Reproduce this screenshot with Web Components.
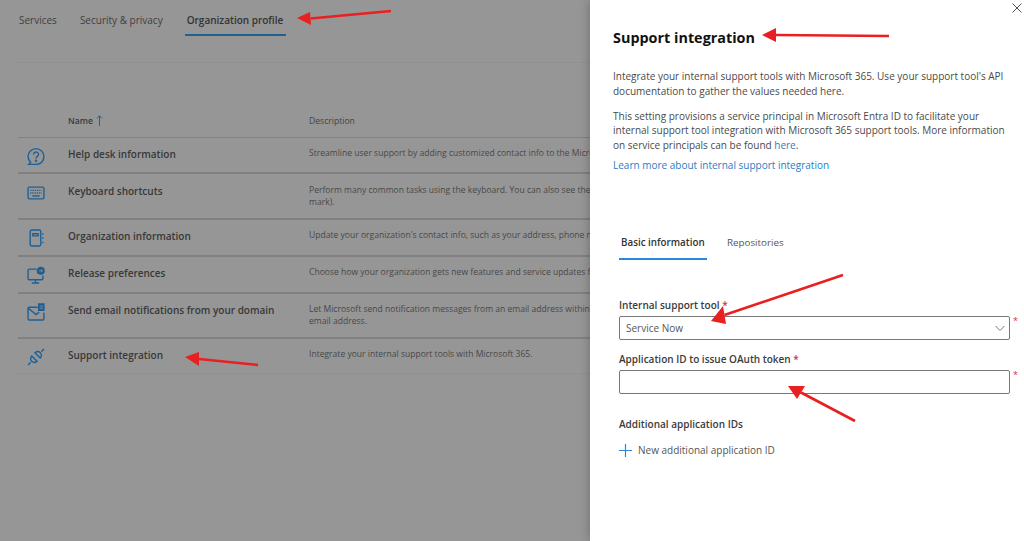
<!DOCTYPE html>
<html lang="en">
<head>
<meta charset="utf-8">
<title>Support integration</title>
<style>
  html, body { margin: 0; height: 541px; overflow: hidden; background: #969696; }
  body { font-family: "Open Sans", "Noto Sans", sans-serif; position: relative; }
  .page { display: flex; width: 1024px; height: 541px; }
  side-panel a { color: #2b7cc4; }
</style>
</head>
<body>
<div class="page">
  <settings-page>
    <page-tab slot="tabs" style="margin-right:1px">Services</page-tab>
    <page-tab slot="tabs">Security &amp; privacy</page-tab>
    <page-tab slot="tabs" active>Organization profile</page-tab>

    <settings-row h="36" icon="help" name="Help desk information">Streamline user support by adding customized contact info to the Microsoft 365 admin center.</settings-row>
    <settings-row h="46" pad="10" icon="keyboard" name="Keyboard shortcuts">Perform many common tasks using the keyboard. You can also see these shortcuts by pressing ? (question<br>mark).</settings-row>
    <settings-row h="37" icon="notebook" name="Organization information">Update your organization's contact info, such as your address, phone number and email.</settings-row>
    <settings-row h="37" icon="monitor" name="Release preferences">Choose how your organization gets new features and service updates from Microsoft 365.</settings-row>
    <settings-row h="45" icon="mail" name="Send email notifications from your domain">Let Microsoft send notification messages from an email address within your domain instead of the default<br>email address.</settings-row>
    <settings-row h="35" icon="plug" name="Support integration">Integrate your internal support tools with Microsoft 365.</settings-row>
  </settings-page>

  <side-panel heading="Support integration">
    <p>Integrate your internal support tools with Microsoft 365. Use your support tool's API documentation to gather the values needed here.</p>
    <p>This setting provisions a service principal in Microsoft Entra ID to facilitate your internal support tool integration with Microsoft 365 support tools. More information on service principals can be found <a>here</a>.</p>
    <p><a>Learn more about internal support integration</a></p>
    <support-form slot="form"></support-form>
  </side-panel>
</div>
<arrow-layer></arrow-layer>

<script>
const icons = {
  help: `<path d="M3.500 14.500C1.800 13 1 11 1 9a7.500 7.500 0 1 1 7.500 7.500H1.500l2-2z"/><path d="M6.200 7a2.300 2.300 0 1 1 3.600 1.900c-.9.600-1.300 1-1.300 2"/><circle cx="8.500" cy="13" r=".5"/>`,
  keyboard: `<rect x="1" y="3" width="15" height="11" rx="1.200"/><path stroke-dasharray="1.200 .9" d="M3 6h11M3 8.500h11"/><path d="M5 11.300h7"/>`,
  notebook: `<rect x="3" y="1" width="10" height="15" rx="1.500"/><path d="M5.500 4.500h5v2h-5zM15 4v1.500M15 8v1.500M15 12v1.500"/>`,
  monitor: `<path d="M9 3H2.200C1.500 3 1 3.500 1 4.200v7.600c0 .7.500 1.200 1.200 1.200h11.600c.7 0 1.200-.5 1.200-1.200V9M8 13v3M4.500 16h7"/><circle cx="13" cy="4.500" r="3.200" fill="#1f5f94"/><path d="M11.500 4.500h3M13.500 3.300l1 1.200-1 1.200" stroke="#969696" stroke-width=".8"/>`,
  mail: `<path d="M10 4H2.200C1.500 4 1 4.500 1 5.200v9.600c0 .7.500 1.200 1.200 1.200h12.600c.7 0 1.200-.5 1.200-1.200V9M1.300 5l7.200 6 3-2.400"/><path d="M11 1h5v6h-5z" fill="#1f5f94"/><path d="M12 3h3M12 5h3" stroke="#969696" stroke-width=".7"/>`,
  plug: `<path d="M1 16l2.500-2.500M16 1l-2.500 2.500M4.500 7.500l5 5c-1.500 1.500-3.500 1.500-5 .1s-1.500-3.600 0-5.100zM12.500 9.500l-5-5c1.500-1.500 3.500-1.500 5-.1s1.500 3.600 0 5.100z"/>`
};

class SettingsPage extends HTMLElement {
  constructor() {
    super();
    this.attachShadow({ mode: 'open' }).innerHTML = `
      <style>
        :host { display: block; width: 590px; height: 541px; overflow: hidden; flex: none; color: #3a3a3a; }
        .tabs { display: flex; gap: 22px; padding: 13px 0 0 19px; height: 23px; }
        .rule { margin: 26px 0 0 18px; border-top: 1px dotted #8a8a8a; }
        .head { display: grid; grid-template-columns: 241px 1fr; margin: 48px 0 0 18px; padding: 4px 0 0 50px; height: 27px; box-sizing: border-box; font-size: 8.600px; line-height: 12px; border-bottom: 1px solid #828282; }
        .head b { font-weight: 600; }
        .head span { color: #444; }
        .head svg { width: 7px; height: 11px; margin-left: 1px; vertical-align: -2px; stroke: #2a5f88; fill: none; }
      </style>
      <div class="tabs"><slot name="tabs"></slot></div>
      <div class="rule"></div>
      <div class="head"><div><b>Name</b> <svg viewBox="0 0 7 11"><path d="M3.500 11V1M1 3.300L3.500 .8 6 3.300"/></svg></div><span>Description</span></div>
      <slot></slot>`;
  }
}

class PageTab extends HTMLElement {
  constructor() {
    super();
    this.attachShadow({ mode: 'open' }).innerHTML = `
      <style>
        :host { display: block; font-size: 10px; line-height: 15px; height: 23px; color: #3f3f3f; box-sizing: border-box; }
        :host([active]) { font-weight: 600; color: #333; border-bottom: 2px solid #22618f; padding: 0 2.500px 0 2px; }
      </style>
      <slot></slot>`;
  }
}

class SettingsRow extends HTMLElement {
  constructor() {
    super();
    const icon = this.getAttribute('icon');
    const name = this.getAttribute('name');
    const pad = this.getAttribute('pad') || 9;
    this.attachShadow({ mode: 'open' }).innerHTML = `
      <style>
        :host { display: grid; grid-template-columns: 50px 241px 1fr; margin-left: 18px; box-sizing: border-box; height: ${this.getAttribute('h')}px; border-bottom: 2px solid #818181; padding-top: ${pad}px; }
        :host(:last-child) { border-bottom: 1px dotted #8a8a8a; }
        svg { width: 18px; height: 18px; margin-left: 9px; fill: none; stroke: #1f5f94; stroke-width: 1.300; }
        .name { font-size: 10px; font-weight: 600; line-height: 15px; color: #383838; white-space: nowrap; }
        .desc { font-size: 8.550px; line-height: 12.300px; color: #484848; white-space: nowrap; overflow: hidden; }
      </style>
      <svg viewBox="0 0 17 17">${icons[icon]}</svg>
      <div class="name">${name}</div>
      <div class="desc"><slot></slot></div>`;
  }
}

class SidePanel extends HTMLElement {
  constructor() {
    super();
    this.attachShadow({ mode: 'open' }).innerHTML = `
      <style>
        :host { display: block; position: relative; z-index: 1; flex: none; box-sizing: border-box; width: 434px; height: 541px; background: #fff; padding: 28px 0 0 23px; color: #4a4a4a; box-shadow: 0 0 10px rgba(0,0,0,.28); }
        h1 { margin: 0 0 22px; font-size: 14.400px; line-height: 19px; font-weight: 700; color: #111; }
        .close { position: absolute; top: 3px; right: 2px; width: 10px; height: 10px; stroke: #555; stroke-width: 1; fill: none; }
        .copy { font-size: 10px; line-height: 14.500px; max-width: 397px; }
        ::slotted(p) { margin: 0 0 10.500px; }
        ::slotted(p:nth-child(2)) { margin-bottom: 6px; }
        ::slotted(support-form) { margin-top: 62.500px; }
      </style>
      <svg class="close" viewBox="0 0 10 10"><path d="M.5.500l9 9M9.500.500l-9 9"/></svg>
      <h1>${this.getAttribute('heading')}</h1>
      <div class="copy"><slot></slot></div>
      <slot name="form"></slot>`;
  }
}

class SupportForm extends HTMLElement {
  constructor() {
    super();
    this.attachShadow({ mode: 'open' }).innerHTML = `
      <style>
        :host { display: block; margin-left: 6px; }
        .tabs { display: flex; height: 37px; margin-bottom: 26px; font-size: 9.800px; color: #555; box-sizing: border-box; }
        .tabs div { line-height: 15px; padding: 0 2px; }
        .tabs .on { font-weight: 600; color: #333; border-bottom: 2px solid #2b88d8; width: 84px; height: 23px; margin-right: 18px; }
        .label { font-size: 10px; font-weight: 600; line-height: 14px; color: #3b3b3b; }
        .label span, .req { color: #d13438; }
        .row { display: flex; margin-top: 4px; }
        .box { display: flex; flex: none; align-items: center; justify-content: space-between; width: 391px; height: 24px; box-sizing: border-box; border: 1px solid #777; border-radius: 2px; padding: 0 4px 0 6px; font-size: 10px; color: #555; }
        .req { font-size: 9px; line-height: 9px; margin-left: 3px; }
        svg.chev { width: 10px; height: 10px; fill: none; stroke: #777; }
        .add { display: flex; align-items: center; gap: 6px; margin-top: 12px; font-size: 10px; color: #555; line-height: 14px; }
        .add svg { width: 13px; height: 13px; stroke: #2b88d8; stroke-width: 1.200; fill: none; }
      </style>
      <div class="tabs"><div class="on">Basic information</div><div>Repositories</div></div>
      <div class="label">Internal support tool <span>*</span></div>
      <div class="row"><div class="box">Service Now<svg class="chev" viewBox="0 0 10 10"><path d="M.5 3l4.500 4.500L9.500 3"/></svg></div><div class="req">*</div></div>
      <div class="label" style="margin-top:12px">Application ID to issue OAuth token <span>*</span></div>
      <div class="row"><div class="box"></div><div class="req">*</div></div>
      <div class="label" style="margin-top:23px">Additional application IDs</div>
      <div class="add"><svg viewBox="0 0 13 13"><path d="M6.500 0v13M0 6.500h13"/></svg>New additional application ID</div>`;
  }
}

// red annotation arrows drawn over the screenshot
class ArrowLayer extends HTMLElement {
  constructor() {
    super();
    const arrows = [
      { tail: [391, 11], tip: [297, 18], a: [310, 12], b: [311, 25] },
      { tail: [258, 365], tip: [185, 357], a: [199, 352], b: [199, 366] },
      { tail: [889, 36], tip: [762, 35], a: [776, 28], b: [776, 42] },
      { tail: [843, 275], tip: [711, 321], a: [723, 306], b: [726, 324] },
      { tail: [855, 421], tip: [788, 386], a: [805, 386], b: [797, 399] }
    ];
    const marks = arrows.map(({ tail, tip, a, b }) => {
      const mx = (a[0] + b[0]) / 2, my = (a[1] + b[1]) / 2;
      return `<path d="M${tail} L${mx} ${my}" stroke="#e8201f" stroke-width="2.600" fill="none"/><polygon points="${tip} ${a} ${b}" fill="#e8201f"/>`;
    }).join('');
    this.attachShadow({ mode: 'open' }).innerHTML = `
      <style>
        :host { position: absolute; left: 0; top: 0; width: 1024px; height: 541px; z-index: 5; pointer-events: none; }
        svg { display: block; }
      </style>
      <svg width="1024" height="541" viewBox="0 0 1024 541">${marks}</svg>`;
  }
}

customElements.define('settings-page', SettingsPage);
customElements.define('page-tab', PageTab);
customElements.define('settings-row', SettingsRow);
customElements.define('side-panel', SidePanel);
customElements.define('support-form', SupportForm);
customElements.define('arrow-layer', ArrowLayer);
</script>
</body>
</html>
